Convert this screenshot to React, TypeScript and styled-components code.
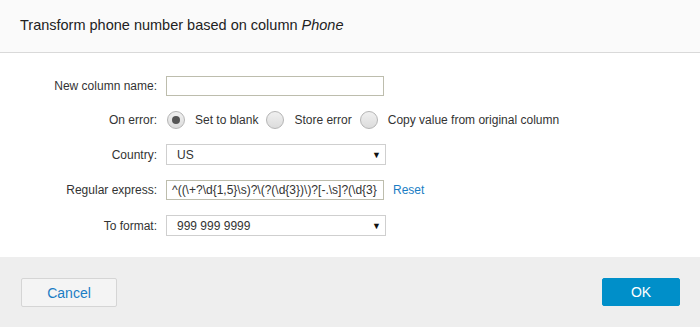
import styled, { createGlobalStyle } from "styled-components";

const GlobalStyle = createGlobalStyle`
  html, body {
    margin: 0;
    padding: 0;
    background: #ffffff;
  }
  body {
    font-family: "Liberation Sans", Arial, sans-serif;
    color: #333;
  }
`;

const Dialog = styled.div`
  width: 700px;
  height: 327px;
  display: flex;
  flex-direction: column;
  background: #fff;
`;

const Header = styled.div`
  height: 53px;
  box-sizing: border-box;
  display: flex;
  align-items: center;
  padding: 0 20px 2px;
  background: #fafafa;
  border-bottom: 1px solid #d9d9d9;
  font-size: 14.5px;
  color: #222;
`;

const Body = styled.div`
  flex: 1;
  display: flex;
  flex-direction: column;
  gap: 15px;
  padding-top: 23px;
`;

const Row = styled.div`
  display: flex;
  align-items: center;
  min-height: 18px;
`;

const Label = styled.label`
  width: 157px;
  text-align: right;
  font-size: 12px;
  color: #333;
  margin-right: 9px;
  flex-shrink: 0;
`;

const TextInput = styled.div`
  width: 218px;
  height: 20px;
  box-sizing: border-box;
  border: 1px solid #bdbdad;
  background: #fff;
  font-size: 12px;
  color: #333;
  padding: 0 0 0 5px;
  line-height: 18px;
  white-space: nowrap;
  overflow: hidden;
`;

const Select = styled.div`
  width: 220px;
  height: 21px;
  box-sizing: border-box;
  border: 1px solid #cfcfcf;
  background: #fff;
  font-size: 12px;
  color: #333;
  padding: 0 4px 0 10px;
  display: flex;
  align-items: center;
  justify-content: space-between;
`;

const Arrow = styled.span`
  font-size: 9px;
  color: #111;
`;

const RadioGroup = styled.div`
  display: flex;
  align-items: center;
  margin-left: 1px;
`;

const RadioOption = styled.div`
  display: flex;
  align-items: center;
  gap: 10px;
  margin-right: 8px;
  font-size: 12px;
  color: #333;
`;

const RadioCircle = styled.span<{ checked?: boolean }>`
  width: 18px;
  height: 18px;
  box-sizing: border-box;
  border-radius: 50%;
  border: 1px solid #b5b5b5;
  background: linear-gradient(#f0f0f0, #dcdcdc);
  display: flex;
  align-items: center;
  justify-content: center;
  &::after {
    content: "";
    display: ${(p) => (p.checked ? "block" : "none")};
    width: 8px;
    height: 8px;
    border-radius: 50%;
    background: #555;
  }
`;

const ResetLink = styled.a`
  margin-left: 9px;
  font-size: 12px;
  color: #1a7dc4;
  text-decoration: none;
`;

const Footer = styled.div`
  height: 70px;
  box-sizing: border-box;
  background: #eeeeee;
  display: flex;
  justify-content: space-between;
  align-items: flex-start;
  padding: 21px 20px 0 21px;
`;

const Button = styled.button<{ primary?: boolean }>`
  font-family: "Liberation Sans", Arial, sans-serif;
  font-size: 14px;
  height: ${(p) => (p.primary ? "28px" : "29px")};
  width: ${(p) => (p.primary ? "78px" : "96px")};
  border-radius: 2px;
  border: 1px solid ${(p) => (p.primary ? "#008fc9" : "#d5d5d5")};
  background: ${(p) => (p.primary ? "#008fc9" : "#f4f4f4")};
  color: ${(p) => (p.primary ? "#fff" : "#1a7dc4")};
  cursor: pointer;
  padding: 0;
`;

export default function App() {
  return (
    <>
      <GlobalStyle />
      <Dialog>
        <Header>
          Transform phone number based on column&nbsp;<i>Phone</i>
        </Header>
        <Body>
          <Row>
            <Label>New column name:</Label>
            <TextInput />
          </Row>
          <Row>
            <Label>On error:</Label>
            <RadioGroup>
              <RadioOption>
                <RadioCircle checked />
                Set to blank
              </RadioOption>
              <RadioOption>
                <RadioCircle />
                Store error
              </RadioOption>
              <RadioOption>
                <RadioCircle />
                Copy value from original column
              </RadioOption>
            </RadioGroup>
          </Row>
          <Row>
            <Label>Country:</Label>
            <Select>
              US
              <Arrow>▼</Arrow>
            </Select>
          </Row>
          <Row>
            <Label>Regular express:</Label>
            <TextInput>{"^((\\+?\\d{1,5}\\s)?\\(?(\\d{3})\\)?[-.\\s]?(\\d{3}"}</TextInput>
            <ResetLink>Reset</ResetLink>
          </Row>
          <Row>
            <Label>To format:</Label>
            <Select>
              999 999 9999
              <Arrow>▼</Arrow>
            </Select>
          </Row>
        </Body>
        <Footer>
          <Button>Cancel</Button>
          <Button primary>OK</Button>
        </Footer>
      </Dialog>
    </>
  );
}
